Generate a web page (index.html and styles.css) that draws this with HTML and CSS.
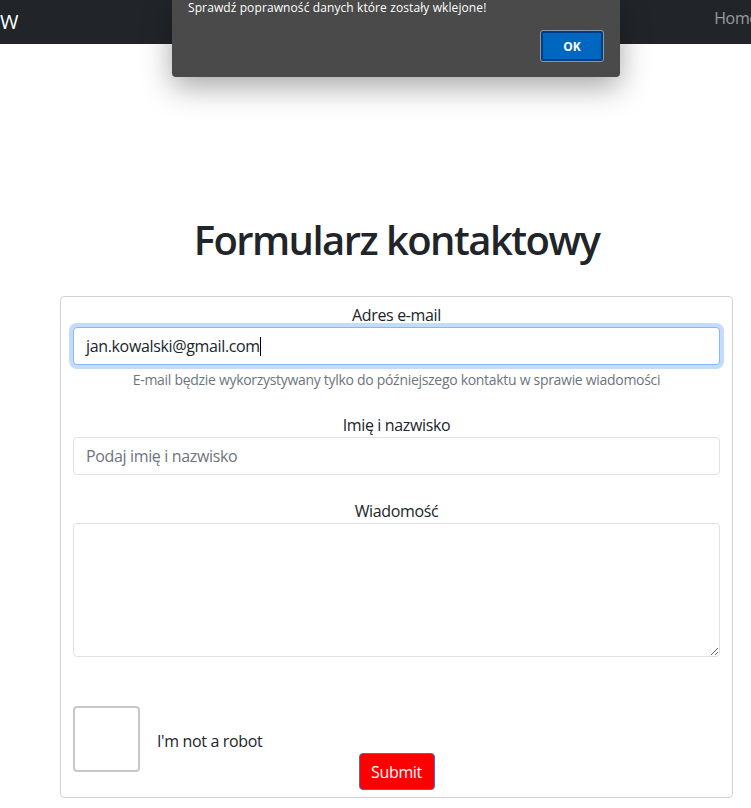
FILE: index.html
```html
<!DOCTYPE html>
<html lang="pl">
<head>
<meta charset="utf-8">
<title>Formularz kontaktowy</title>
<link rel="stylesheet" href="styles.css">
</head>
<body>
<nav class="navbar">
  <span class="brand">W</span>
  <a class="nav-link" href="#">Home</a>
</nav>

<main class="main">
  <h1 class="title">Formularz kontaktowy</h1>
  <form class="card">
    <div class="group group-email">
      <label class="label" for="email">Adres e-mail</label>
      <div class="control focused">jan.kowalski@gmail.com<span class="caret"></span></div>
      <div class="help">E-mail będzie wykorzystywany tylko do późniejszego kontaktu w sprawie wiadomości</div>
    </div>
    <div class="group">
      <label class="label" for="name">Imię i nazwisko</label>
      <input class="input" id="name" type="text" placeholder="Podaj imię i nazwisko">
    </div>
    <div class="group">
      <label class="label" for="msg">Wiadomość</label>
      <textarea class="input textarea" id="msg" rows="5"></textarea>
    </div>
    <div class="captcha">
      <div class="captcha-box"></div>
      <span class="captcha-text">I'm not a robot</span>
    </div>
    <div class="actions">
      <button class="submit" type="button">Submit</button>
    </div>
  </form>
</main>

<div class="dialog">
  <p class="dialog-text">Sprawdź poprawność danych które zostały wklejone!</p>
  <div class="dialog-actions">
    <button class="dialog-ok" type="button">OK</button>
  </div>
</div>
</body>
</html>
```

FILE: styles.css
```css
* { box-sizing: border-box; }

html, body {
  margin: 0;
  padding: 0;
  overflow: hidden;
}

body {
  font-family: "Segoe UI", "Open Sans", "Noto Sans", sans-serif;
  font-size: 16px;
  line-height: 1.5;
  letter-spacing: -0.35px;
  color: #212529;
  background: #fff;
  width: 751px;
  height: 808px;
  position: relative;
}

.navbar {
  height: 44px;
  background: #212529;
  display: flex;
  align-items: center;
  justify-content: space-between;
}

.brand {
  color: #fff;
  font-size: 20px;
  line-height: 1;
  margin-top: -1px;
}

.nav-link {
  color: rgba(255, 255, 255, 0.55);
  text-decoration: none;
  font-size: 16px;
  margin-right: -7px;
  margin-top: -8px;
}

.main {
  padding-left: 60px;
  width: 733px;
}

.title {
  margin: 172px 0 0 0;
  height: 80px;
  font-size: 40px;
  font-weight: 600;
  line-height: 1.2;
  letter-spacing: -1.55px;
  text-align: center;
}

.card {
  display: block;
  width: 673px;
  border: 1px solid rgba(0, 0, 0, 0.175);
  border-radius: 4px;
  padding: 6px 12px 7px;
  text-align: center;
}

.group {
  margin-bottom: 24px;
}

.group-email {
  margin-bottom: 23px;
}

.label {
  display: block;
  line-height: 24px;
}

.control,
.input {
  display: block;
  width: 100%;
  height: 38px;
  padding: 6px 12px;
  font-family: inherit;
  font-size: 16px;
  line-height: 24px;
  letter-spacing: -0.35px;
  color: #212529;
  background: #fff;
  border: 1px solid #dee2e6;
  border-radius: 4px;
  text-align: left;
  outline: none;
}

.input::placeholder {
  color: #6c757d;
}

.focused {
  border-color: #86b7fe;
  box-shadow: 0 0 0 4px rgba(13, 110, 253, 0.25);
}

.caret {
  display: inline-block;
  width: 1px;
  height: 19px;
  background: #000;
  vertical-align: -4px;
  margin-left: 0;
}

.textarea {
  height: 134px;
  resize: vertical;
}

.help {
  margin-top: 4px;
  font-size: 14px;
  line-height: 21px;
  letter-spacing: -0.3px;
  color: #6c757d;
}

.captcha {
  margin-top: 49px;
  height: 47px;
  display: flex;
  align-items: flex-start;
  text-align: left;
}

.captcha-box {
  flex: none;
  width: 67px;
  height: 66px;
  border: 2px solid #c8c8c8;
  border-radius: 4px;
  background: #fff;
}

.captcha-text {
  margin-left: 17px;
  margin-top: 23px;
  line-height: 24px;
  color: #212529;
}

.actions {
  display: flex;
  justify-content: center;
}

.submit {
  width: 76px;
  height: 37px;
  font-family: inherit;
  font-size: 16px;
  letter-spacing: -0.35px;
  color: #fff;
  background: #ff0000;
  border: 1px solid #3d6fd6;
  border-radius: 4px;
  padding: 0;
}

.dialog {
  position: absolute;
  top: 0;
  left: 172px;
  width: 448px;
  height: 77px;
  background: #4a4a4a;
  border-radius: 0 0 4px 4px;
  box-shadow: 0 10px 30px rgba(0, 0, 0, 0.35);
  padding: 1px 16px 0;
  font-size: 12px;
  letter-spacing: 0.1px;
  color: #fff;
}

.dialog-text {
  margin: 0;
  line-height: 14px;
}

.dialog-actions {
  display: flex;
  justify-content: flex-end;
  margin-top: 16px;
  padding-right: 1px;
}

.dialog-ok {
  width: 62px;
  height: 30px;
  background: #0067c0;
  color: #fff;
  font-family: inherit;
  font-weight: 700;
  font-size: 12px;
  border: 2px solid #003d84;
  outline: 1px solid #8c96a0;
  border-radius: 2px;
  padding: 0;
}
```
